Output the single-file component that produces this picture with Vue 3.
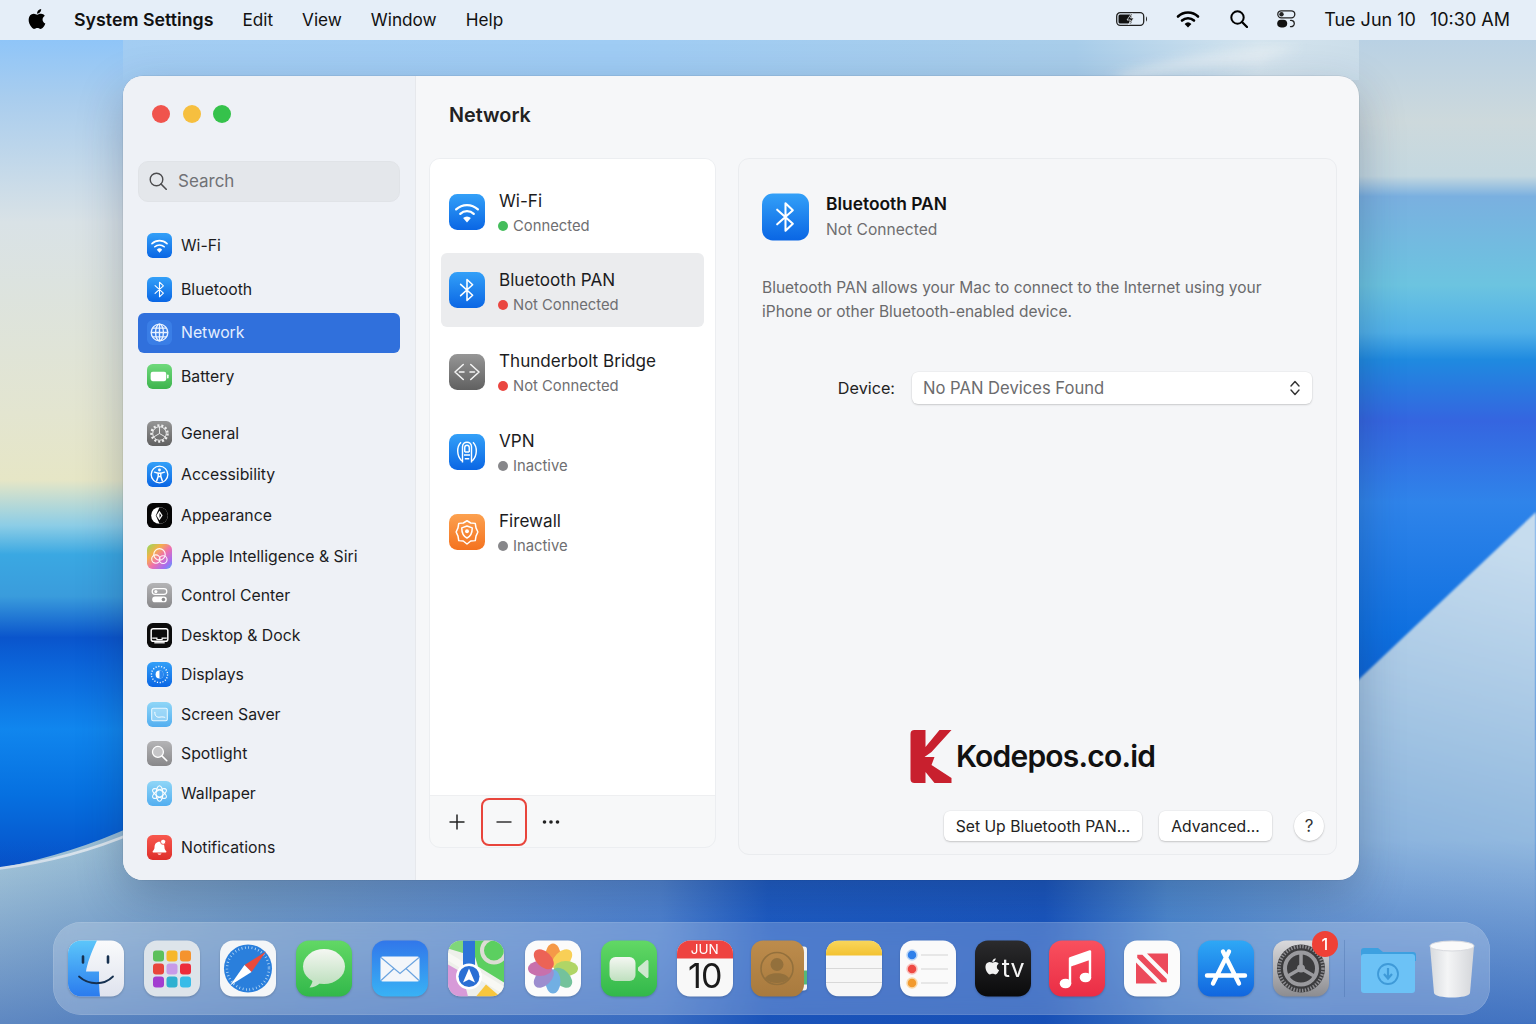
<template>
  <div class="desktop">
    <!-- wallpaper -->
    <svg class="wallpaper" viewBox="0 0 1536 1024" preserveAspectRatio="none">
      <defs>
        <linearGradient id="wpLeft" x1="0" y1="40" x2="0" y2="870" gradientUnits="userSpaceOnUse">
          <stop offset="0" stop-color="#8fc5f8" />
          <stop offset="0.07" stop-color="#a9cdee" />
          <stop offset="0.22" stop-color="#d9e2e6" />
          <stop offset="0.45" stop-color="#e3e5d0" />
          <stop offset="0.53" stop-color="#e6e6c6" />
          <stop offset="0.585" stop-color="#8ccde6" />
          <stop offset="0.62" stop-color="#3aa8e2" />
          <stop offset="0.67" stop-color="#3a9cdc" />
          <stop offset="0.72" stop-color="#0a55cc" />
          <stop offset="0.75" stop-color="#0b63d8" />
          <stop offset="0.83" stop-color="#1086ee" />
          <stop offset="0.91" stop-color="#0670e0" />
          <stop offset="1" stop-color="#0650c8" />
        </linearGradient>
        <linearGradient id="wpRight" x1="0" y1="40" x2="0" y2="720" gradientUnits="userSpaceOnUse">
          <stop offset="0" stop-color="#b9d1e4" />
          <stop offset="0.12" stop-color="#cdd9dc" />
          <stop offset="0.2" stop-color="#c4d8e0" />
          <stop offset="0.23" stop-color="#7ab0e0" />
          <stop offset="0.36" stop-color="#6cc4e0" />
          <stop offset="0.43" stop-color="#50b0e8" />
          <stop offset="0.47" stop-color="#1f8ae0" />
          <stop offset="0.56" stop-color="#3565e0" />
          <stop offset="0.68" stop-color="#2f84ea" />
          <stop offset="0.87" stop-color="#0f70e0" />
          <stop offset="1" stop-color="#0a5cd0" />
        </linearGradient>
        <linearGradient id="wpTop" x1="0" y1="0" x2="1536" y2="0" gradientUnits="userSpaceOnUse">
          <stop offset="0" stop-color="#a4cdf2" />
          <stop offset="0.4" stop-color="#9fccf4" />
          <stop offset="0.7" stop-color="#a8cdea" />
          <stop offset="0.82" stop-color="#d4e4ee" />
          <stop offset="1" stop-color="#bcd2e2" />
        </linearGradient>
        <linearGradient id="wpBottom" x1="0" y1="0" x2="1536" y2="0" gradientUnits="userSpaceOnUse">
          <stop offset="0" stop-color="#a8c9d9" />
          <stop offset="0.16" stop-color="#86aecf" />
          <stop offset="0.33" stop-color="#6d9cd6" />
          <stop offset="0.43" stop-color="#5c90d8" />
          <stop offset="0.5" stop-color="#2060c8" />
          <stop offset="0.68" stop-color="#1b59c2" />
          <stop offset="0.76" stop-color="#5b97d6" />
          <stop offset="0.9" stop-color="#82aedc" />
          <stop offset="1" stop-color="#8db5de" />
        </linearGradient>
        <linearGradient id="wpShade" x1="0" y1="840" x2="0" y2="1024" gradientUnits="userSpaceOnUse">
          <stop offset="0" stop-color="#1446aa" stop-opacity="0" />
          <stop offset="1" stop-color="#1446aa" stop-opacity="0.5" />
        </linearGradient>
        <linearGradient id="wpSlope" x1="1500" y1="540" x2="1380" y2="1000" gradientUnits="userSpaceOnUse">
          <stop offset="0" stop-color="#c6dcee" />
          <stop offset="0.45" stop-color="#9fc2e2" />
          <stop offset="1" stop-color="#6f9fd8" />
        </linearGradient>
        <filter id="wpBlur"><feGaussianBlur stdDeviation="1.2" /></filter>
        <filter id="wpBlurBig"><feGaussianBlur stdDeviation="6" /></filter>
      </defs>
      <rect x="0" y="40" width="768" height="840" fill="url(#wpLeft)" />
      <rect x="768" y="40" width="768" height="700" fill="url(#wpRight)" />
      <rect x="123" y="40" width="1236" height="40" fill="url(#wpTop)" />
      <path d="M1110 78 Q1190 52 1300 46 L1260 62 Q1180 66 1130 80Z" fill="#e8f0f4" opacity="0.8" filter="url(#wpBlurBig)" />
      <path d="M1300 735 L1536 512 V1024 H1300Z" fill="url(#wpSlope)" filter="url(#wpBlur)" />
      <path d="M-5 869 Q70 855 135 825 V1030 H-5Z" fill="url(#wpBottom)" />
      <path d="M-5 869 Q70 860 135 832" stroke="#dfe8ee" stroke-width="2.5" fill="none" />
      <rect x="100" y="870" width="1230" height="160" fill="url(#wpBottom)" />
      <rect x="1300" y="870" width="236" height="154" fill="url(#wpSlope)" opacity="0.55" />
      <rect x="0" y="840" width="1536" height="184" fill="url(#wpShade)" />
    </svg>

    <!-- shared icon symbols -->
    <svg class="defs" width="0" height="0">
      <defs>
        <linearGradient id="gBlue" x1="0" y1="0" x2="0" y2="1">
          <stop offset="0" stop-color="#33a0f8" /><stop offset="1" stop-color="#0a66e4" />
        </linearGradient>
        <linearGradient id="gGreen" x1="0" y1="0" x2="0" y2="1">
          <stop offset="0" stop-color="#6fd97c" /><stop offset="1" stop-color="#3db44d" />
        </linearGradient>
        <linearGradient id="gGray" x1="0" y1="0" x2="0" y2="1">
          <stop offset="0" stop-color="#969696" /><stop offset="1" stop-color="#606060" />
        </linearGradient>
        <linearGradient id="gLight" x1="0" y1="0" x2="0" y2="1">
          <stop offset="0" stop-color="#b4b4b6" /><stop offset="1" stop-color="#88888a" />
        </linearGradient>
        <linearGradient id="gOrange" x1="0" y1="0" x2="0" y2="1">
          <stop offset="0" stop-color="#fca14f" /><stop offset="1" stop-color="#f4721f" />
        </linearGradient>
        <linearGradient id="gRed" x1="0" y1="0" x2="0" y2="1">
          <stop offset="0" stop-color="#f8584e" /><stop offset="1" stop-color="#de2e2a" />
        </linearGradient>
        <linearGradient id="gSky" x1="0" y1="0" x2="0" y2="1">
          <stop offset="0" stop-color="#8fd6f7" /><stop offset="1" stop-color="#52aef0" />
        </linearGradient>
        <linearGradient id="gSiri" x1="0" y1="0" x2="1" y2="1">
          <stop offset="0" stop-color="#8fdc5a" /><stop offset="0.3" stop-color="#f5b04a" />
          <stop offset="0.55" stop-color="#ee6fae" /><stop offset="0.8" stop-color="#a66ef0" />
          <stop offset="1" stop-color="#4fa8f5" />
        </linearGradient>
        <linearGradient id="gBlack" x1="0" y1="0" x2="0" y2="1">
          <stop offset="0" stop-color="#2b2b2d" /><stop offset="1" stop-color="#0a0a0b" />
        </linearGradient>
        <linearGradient id="gFinder" x1="0" y1="0" x2="0" y2="1">
          <stop offset="0" stop-color="#5cc6fa" /><stop offset="1" stop-color="#2a7bee" />
        </linearGradient>
        <linearGradient id="gFinderR" x1="0" y1="0" x2="0" y2="1">
          <stop offset="0" stop-color="#fafbfc" /><stop offset="1" stop-color="#dfe3ee" />
        </linearGradient>
        <linearGradient id="gBubble" x1="0" y1="0" x2="0" y2="1">
          <stop offset="0" stop-color="#f4f7f2" /><stop offset="1" stop-color="#bfe0bf" />
        </linearGradient>
        <linearGradient id="gMail" x1="0" y1="0" x2="0" y2="1">
          <stop offset="0" stop-color="#3177ea" /><stop offset="1" stop-color="#39b2f5" />
        </linearGradient>
        <linearGradient id="gMsg" x1="0" y1="0" x2="0" y2="1">
          <stop offset="0" stop-color="#62d865" /><stop offset="1" stop-color="#32b84a" />
        </linearGradient>
        <linearGradient id="gMusic" x1="0" y1="0" x2="0" y2="1">
          <stop offset="0" stop-color="#f9505e" /><stop offset="1" stop-color="#ea2d45" />
        </linearGradient>
        <linearGradient id="gStore" x1="0" y1="0" x2="0" y2="1">
          <stop offset="0" stop-color="#2ea8f6" /><stop offset="1" stop-color="#1166df" />
        </linearGradient>
        <linearGradient id="gSteel" x1="0" y1="0" x2="0" y2="1">
          <stop offset="0" stop-color="#dadadc" /><stop offset="1" stop-color="#8c8c90" />
        </linearGradient>
        <linearGradient id="gBrown" x1="0" y1="0" x2="0" y2="1">
          <stop offset="0" stop-color="#bd8c4c" /><stop offset="1" stop-color="#a87a3e" />
        </linearGradient>
        <linearGradient id="gNote" x1="0" y1="0" x2="0" y2="1">
          <stop offset="0" stop-color="#f8d65c" /><stop offset="1" stop-color="#f3c231" />
        </linearGradient>
        <linearGradient id="gTrash" x1="0" y1="0" x2="1" y2="0">
          <stop offset="0" stop-color="#d7dade" /><stop offset="0.4" stop-color="#f4f5f6" /><stop offset="1" stop-color="#d4d6da" />
        </linearGradient>
        <clipPath id="clipMaps"><rect width="56" height="56" rx="13" /></clipPath>
        <clipPath id="clipNotes"><rect width="56" height="56" rx="13" /></clipPath>
        <path id="applePath" d="M17.05 20.28c-.98.95-2.05.8-3.08.35-1.09-.46-2.09-.48-3.24 0-1.44.62-2.2.44-3.06-.35C2.79 15.25 3.51 7.59 9.05 7.31c1.35.07 2.29.74 3.08.8 1.18-.24 2.31-.93 3.57-.84 1.51.12 2.65.72 3.4 1.8-3.12 1.87-2.38 5.98.48 7.13-.57 1.5-1.31 2.99-2.54 4.09zM12.03 7.25c-.15-2.23 1.66-4.07 3.74-4.25.29 2.58-2.34 4.5-3.74 4.25z" />
      </defs>

      <!-- settings icons, 48 box -->
      <symbol id="i-wifi" viewBox="0 0 48 48">
        <rect width="48" height="48" rx="11" fill="url(#gBlue)" />
        <g fill="none" stroke="#fff" stroke-width="3" stroke-linecap="round">
          <path d="M9.5 20.5a21 21 0 0 1 29 0" />
          <path d="M15 26.5a13 13 0 0 1 18 0" />
        </g>
        <path d="M24 38l-5.2-6a7.5 7.5 0 0 1 10.4 0z" fill="#fff" />
      </symbol>
      <symbol id="i-bt" viewBox="0 0 48 48">
        <rect width="48" height="48" rx="11" fill="url(#gBlue)" />
        <path d="M15.5 16.5L31.5 31L24 38V10L31.5 17L15.5 31.5" fill="none" stroke="#fff" stroke-width="2.1" stroke-linejoin="round" stroke-linecap="round" />
      </symbol>
      <symbol id="i-globe" viewBox="0 0 48 48">
        <rect width="48" height="48" rx="11" fill="#3a7ee6" />
        <g fill="none" stroke="#e8f2ff" stroke-width="2.6">
          <circle cx="24" cy="24" r="16" />
          <ellipse cx="24" cy="24" rx="7.5" ry="16" />
          <path d="M24 8v32M8 24h32M10.5 15.5h27M10.5 32.5h27" />
        </g>
      </symbol>
      <symbol id="i-battery" viewBox="0 0 48 48">
        <rect width="48" height="48" rx="11" fill="url(#gGreen)" />
        <rect x="7" y="15" width="30" height="18" rx="4" fill="#fff" />
        <rect x="38.5" y="20" width="3" height="8" rx="1.5" fill="#fff" />
      </symbol>
      <symbol id="i-general" viewBox="0 0 48 48">
        <rect width="48" height="48" rx="11" fill="url(#gGray)" />
        <circle cx="24" cy="24" r="15.5" fill="none" stroke="#eee" stroke-width="4.5" stroke-dasharray="4 3.6" />
        <circle cx="24" cy="24" r="13" fill="none" stroke="#eee" stroke-width="1.8" />
        <path d="M24 24V11M24 24l11 6.5M24 24l-11 6.5" stroke="#eee" stroke-width="1.8" fill="none" />
      </symbol>
      <symbol id="i-access" viewBox="0 0 48 48">
        <rect width="48" height="48" rx="11" fill="url(#gBlue)" />
        <circle cx="24" cy="24" r="16" fill="none" stroke="#fff" stroke-width="2.6" />
        <circle cx="24" cy="15.5" r="2.8" fill="#fff" />
        <path d="M14.5 19.5l7 2v6l-3 9M33.5 19.5l-7 2v6l3 9M21.5 21.5h5M22 28h4" stroke="#fff" stroke-width="2.8" fill="none" stroke-linecap="round" />
      </symbol>
      <symbol id="i-appearance" viewBox="0 0 48 48">
        <rect width="48" height="48" rx="11" fill="#050505" />
        <circle cx="24" cy="24" r="16" fill="#fff" />
        <path d="M24 8a16 16 0 0 1 0 32l-7-16z" fill="#0a0a0a" />
        <path d="M24 15l6 9-6 9-6-9z" fill="#fff" />
        <path d="M24 19l3.2 5-3.2 5z" fill="#0a0a0a" />
      </symbol>
      <symbol id="i-siri" viewBox="0 0 48 48">
        <rect width="48" height="48" rx="11" fill="url(#gSiri)" />
        <g fill="none" stroke="#fff" stroke-width="2.2" opacity="0.92">
          <circle cx="24" cy="20" r="11" />
          <circle cx="17" cy="29" r="8" />
          <circle cx="31" cy="30" r="7.5" />
        </g>
      </symbol>
      <symbol id="i-control" viewBox="0 0 48 48">
        <rect width="48" height="48" rx="11" fill="url(#gLight)" />
        <rect x="10" y="11" width="28" height="11" rx="5.5" fill="none" stroke="#fff" stroke-width="2.4" />
        <circle cx="17" cy="16.5" r="3" fill="#fff" />
        <rect x="10" y="26" width="28" height="11" rx="5.5" fill="#fff" />
        <circle cx="31.5" cy="31.5" r="3.4" fill="#8a8a8c" />
      </symbol>
      <symbol id="i-dock" viewBox="0 0 48 48">
        <rect width="48" height="48" rx="11" fill="#0c0c0c" />
        <rect x="8" y="11" width="32" height="24" rx="4" fill="none" stroke="#fff" stroke-width="2.8" />
        <path d="M10 29h9v3h10v-3h9" fill="none" stroke="#fff" stroke-width="2.2" />
        <path d="M14 38h20" stroke="#fff" stroke-width="2.4" />
      </symbol>
      <symbol id="i-display" viewBox="0 0 48 48">
        <rect width="48" height="48" rx="11" fill="url(#gBlue)" />
        <circle cx="24" cy="24" r="15.5" fill="none" stroke="#fff" stroke-width="2.6" stroke-dasharray="2.2 3.2" />
        <circle cx="24" cy="24" r="7.5" fill="#fff" />
        <path d="M24 16.5a7.5 7.5 0 0 1 0 15z" fill="#2b86ee" />
      </symbol>
      <symbol id="i-saver" viewBox="0 0 48 48">
        <rect width="48" height="48" rx="11" fill="url(#gSky)" />
        <rect x="9" y="12" width="30" height="24" rx="3" fill="#bfe8fb" fill-opacity="0.5" stroke="#e9f8ff" stroke-width="2" />
        <path d="M15 19c0 9 5 11 10 10s8 0 10 1" fill="none" stroke="#fff" stroke-width="1.8" />
      </symbol>
      <symbol id="i-spot" viewBox="0 0 48 48">
        <rect width="48" height="48" rx="11" fill="url(#gLight)" />
        <circle cx="21" cy="21" r="10.5" fill="#c5c5c7" stroke="#fff" stroke-width="2.4" />
        <path d="M29 29l9 9" stroke="#fff" stroke-width="3" stroke-linecap="round" />
      </symbol>
      <symbol id="i-wall" viewBox="0 0 48 48">
        <rect width="48" height="48" rx="11" fill="url(#gSky)" />
        <g fill="none" stroke="#fff" stroke-width="2">
          <ellipse cx="24" cy="24" rx="6.5" ry="15" />
          <ellipse cx="24" cy="24" rx="6.5" ry="15" transform="rotate(60 24 24)" />
          <ellipse cx="24" cy="24" rx="6.5" ry="15" transform="rotate(120 24 24)" />
        </g>
      </symbol>
      <symbol id="i-notif" viewBox="0 0 48 48">
        <rect width="48" height="48" rx="11" fill="url(#gRed)" />
        <path d="M24 13c-6 0-9.500 4.500-9.500 10 0 4-1.500 6-4 9 0 1 1 1.500 2 1.500h23c1 0 2-.5 2-1.500-2.500-3-4-5-4-9 0-5.500-3.500-10-9.500-10z" fill="#fff" />
        <path d="M20 35.500a4.500 4.500 0 0 0 8 0z" fill="#fff" />
        <circle cx="31" cy="13" r="5" fill="#fff" stroke="#e83a34" stroke-width="1.5" />
      </symbol>
      <symbol id="i-bridge" viewBox="0 0 48 48">
        <rect width="48" height="48" rx="11" fill="url(#gGray)" />
        <path d="M19 14L8 24l11 10M29 14l11 10-11 10M14 24h6M28 24h6" fill="none" stroke="#f4f4f4" stroke-width="2.1" stroke-linejoin="round" stroke-linecap="round" />
      </symbol>
      <symbol id="i-vpn" viewBox="0 0 48 48">
        <rect width="48" height="48" rx="11" fill="url(#gBlue)" />
        <g fill="none" stroke="#fff" stroke-width="1.9">
          <path d="M17 36c-7-7-7-19-1-25M31 36c7-7 7-19 1-25" />
          <path d="M18 38V17c0-8 12-8 12 0v21" />
          <path d="M21 24v-6c0-4 6-4 6 0v6M20 28h8M21 24h6M21 33h6" />
        </g>
      </symbol>
      <symbol id="i-fire" viewBox="0 0 48 48">
        <rect width="48" height="48" rx="11" fill="url(#gOrange)" />
        <path d="M24 9l5 3 6 .5 1 6 2.500 5.500-2.500 5.500-1 6-6 .5-5 4-5-4-6-.5-1-6L9.500 24l2.500-5.500 1-6 6-.5z" fill="none" stroke="#fff" stroke-width="2" stroke-linejoin="round" />
        <path d="M24 16l7 2.500c0 7-2 11-7 13.500-5-2.500-7-6.500-7-13.500z" fill="none" stroke="#fff" stroke-width="2" stroke-linejoin="round" />
        <circle cx="24" cy="23" r="2.600" fill="#fff" />
      </symbol>

      <!-- dock icons, 56 box -->
      <symbol id="d-finder" viewBox="0 0 56 56">
        <rect width="56" height="56" rx="13" fill="url(#gFinderR)" />
        <path d="M13 0H29C23 12 19 24 18 31H31C31 40 31 49 32 56H13A13 13 0 0 1 0 43V13A13 13 0 0 1 13 0Z" fill="url(#gFinder)" />
        <path d="M15 16v6M40 16v6" stroke="#16304f" stroke-width="2.6" stroke-linecap="round" />
        <path d="M11 36c10 9 25 9 34 0" fill="none" stroke="#16304f" stroke-width="1.8" stroke-linecap="round" />
      </symbol>
      <symbol id="d-launch" viewBox="0 0 56 56">
        <rect width="56" height="56" rx="13" fill="#dde4ea" />
        <rect x="9" y="10" width="11" height="11" rx="3" fill="#5cc05c" />
        <rect x="22.500" y="10" width="11" height="11" rx="3" fill="#f6b72c" />
        <rect x="36" y="10" width="11" height="11" rx="3" fill="#f5932e" />
        <rect x="9" y="23" width="11" height="11" rx="3" fill="#e8453c" />
        <rect x="22.500" y="23" width="11" height="11" rx="3" fill="#c79be8" />
        <rect x="36" y="23" width="11" height="11" rx="3" fill="#ec2c3c" />
        <rect x="9" y="36" width="11" height="11" rx="3" fill="#a23ed0" />
        <rect x="22.500" y="36" width="11" height="11" rx="3" fill="#2fb0d0" />
        <rect x="36" y="36" width="11" height="11" rx="3" fill="#38bce8" />
      </symbol>
      <symbol id="d-safari" viewBox="0 0 56 56">
        <rect width="56" height="56" rx="13" fill="#f4f6f8" />
        <circle cx="28" cy="28" r="24" fill="#2a7fdc" />
        <circle cx="28" cy="28" r="21" fill="none" stroke="#bcdcf6" stroke-width="2.5" stroke-dasharray="0.8 2.6" />
        <path d="M46 11L24.500 24.500L31.500 31.500Z" fill="#ea4a3c" />
        <path d="M10 45L24.500 24.500L31.500 31.500Z" fill="#fff" />
      </symbol>
      <symbol id="d-msg" viewBox="0 0 56 56">
        <rect width="56" height="56" rx="13" fill="url(#gMsg)" />
        <ellipse cx="28" cy="26" rx="21" ry="17.500" fill="url(#gBubble)" />
        <path d="M17 37c0 4-1.500 7-3.500 10 4 0 8-1.500 11-5z" fill="#c6e4c6" />
      </symbol>
      <symbol id="d-mail" viewBox="0 0 56 56">
        <rect width="56" height="56" rx="13" fill="url(#gMail)" />
        <rect x="8.500" y="16" width="39" height="25" rx="2" fill="#f3f6fa" />
        <path d="M9 17l19 16 19-16M9 40l13-12M47 40L34 28" fill="none" stroke="#6ba4e0" stroke-width="1.200" />
      </symbol>
      <symbol id="d-maps" viewBox="0 0 56 56">
        <g clip-path="url(#clipMaps)">
          <rect width="56" height="56" fill="#eef0ea" />
          <path d="M22 0H56V42L30 26Z" fill="#5ccf60" />
          <path d="M0 0H20V14L0 8Z" fill="#7fd67a" />
          <path d="M0 24L14 32 20 56H0Z" fill="#d79ad8" />
          <path d="M28 56L38 44 52 56Z" fill="#f7c63e" />
          <path d="M0 12L56 46V54L0 20Z" fill="#f8f8f4" />
          <rect x="15" y="0" width="12" height="36" fill="#2d74d8" />
          <circle cx="46" cy="10" r="12" fill="none" stroke="#dcdcd4" stroke-width="4" />
          <circle cx="21" cy="36" r="13" fill="#fff" />
          <circle cx="21" cy="36" r="10.500" fill="#2a6fd4" />
          <path d="M21 28l6 14-6-3-6 3z" fill="#fff" />
        </g>
      </symbol>
      <symbol id="d-photos" viewBox="0 0 56 56">
        <rect width="56" height="56" rx="13" fill="#fbfbfb" />
        <g opacity="0.86">
          <ellipse cx="28" cy="15" rx="7.500" ry="12" fill="#f58a2b" />
          <ellipse cx="28" cy="15" rx="7.500" ry="12" fill="#f8c83c" transform="rotate(45 28 28)" />
          <ellipse cx="28" cy="15" rx="7.500" ry="12" fill="#a4cf4e" transform="rotate(90 28 28)" />
          <ellipse cx="28" cy="15" rx="7.500" ry="12" fill="#5fb98c" transform="rotate(135 28 28)" />
          <ellipse cx="28" cy="15" rx="7.500" ry="12" fill="#5ba3e0" transform="rotate(180 28 28)" />
          <ellipse cx="28" cy="15" rx="7.500" ry="12" fill="#8d7cc8" transform="rotate(225 28 28)" />
          <ellipse cx="28" cy="15" rx="7.500" ry="12" fill="#c05aa0" transform="rotate(270 28 28)" />
          <ellipse cx="28" cy="15" rx="7.500" ry="12" fill="#ea4b3c" transform="rotate(315 28 28)" />
        </g>
      </symbol>
      <symbol id="d-facetime" viewBox="0 0 56 56">
        <rect width="56" height="56" rx="13" fill="url(#gMsg)" />
        <rect x="8.500" y="16.500" width="26" height="24" rx="6" fill="url(#gBubble)" />
        <path d="M37 27l8-7c1-1 2.500-.5 2.500 1v15c0 1.500-1.500 2-2.500 1l-8-7z" fill="#cfe8cf" />
      </symbol>
      <symbol id="d-calendar" viewBox="0 0 56 56">
        <rect width="56" height="56" rx="13" fill="#f8f8f8" />
        <path d="M13 0H43A13 13 0 0 1 56 13V18H0V13A13 13 0 0 1 13 0Z" fill="#ee4340" />
      </symbol>
      <symbol id="d-contacts" viewBox="0 0 56 56">
        <rect x="48" y="6" width="8" height="44" rx="3" fill="#f2f2f2" />
        <rect x="51" y="30" width="5" height="14" fill="#55b878" />
        <rect width="53" height="56" rx="12" fill="url(#gBrown)" />
        <circle cx="26" cy="28" r="16" fill="none" stroke="#93703c" stroke-width="1.600" />
        <circle cx="26" cy="24" r="6.500" fill="#93703c" />
        <path d="M14 38c3-7 21-7 24 0-6 6-18 6-24 0z" fill="#93703c" />
      </symbol>
      <symbol id="d-notes" viewBox="0 0 56 56">
        <g clip-path="url(#clipNotes)">
          <rect width="56" height="56" fill="#f6f6f6" />
          <rect width="56" height="15" fill="url(#gNote)" />
          <path d="M0 28h56M0 42h56" stroke="#d8d8d8" stroke-width="1.200" />
        </g>
      </symbol>
      <symbol id="d-remind" viewBox="0 0 56 56">
        <rect width="56" height="56" rx="13" fill="#fafafa" />
        <circle cx="12" cy="14.500" r="5" fill="#2f80ea" stroke="#bcd6f6" stroke-width="1.500" />
        <circle cx="12" cy="28.500" r="5" fill="#ee4a44" stroke="#f8c4c0" stroke-width="1.500" />
        <circle cx="12" cy="42.500" r="5" fill="#f29a2e" stroke="#fad8a8" stroke-width="1.500" />
        <path d="M21 14.500h27M21 28.500h27M21 42.500h27" stroke="#d4d4d4" stroke-width="1.200" />
      </symbol>
      <symbol id="d-tv" viewBox="0 0 56 56">
        <rect width="56" height="56" rx="13" fill="url(#gBlack)" />
        <use href="#applePath" transform="translate(6.500 15) scale(.9)" fill="#f2f2f2" />
      </symbol>
      <symbol id="d-music" viewBox="0 0 56 56">
        <rect width="56" height="56" rx="13" fill="url(#gMusic)" />
        <path d="M21 18v25M41 11v25M21 18l20-7v7l-20 7z" fill="#fff" stroke="#fff" stroke-width="2.400" stroke-linejoin="round" />
        <ellipse cx="16.500" cy="43" rx="5.800" ry="4.800" fill="#fff" />
        <ellipse cx="36.500" cy="37" rx="5.800" ry="4.800" fill="#fff" />
      </symbol>
      <symbol id="d-news" viewBox="0 0 56 56">
        <rect width="56" height="56" rx="13" fill="#fbfbfb" />
        <path d="M12 22L33 43H12ZM23 13H44V34Z" fill="#ec4a5a" />
        <path d="M12 13h7l25 25v5h-7L12 18z" fill="#ec4a5a" stroke="#fbfbfb" stroke-width="2.500" />
      </symbol>
      <symbol id="d-store" viewBox="0 0 56 56">
        <rect width="56" height="56" rx="13" fill="url(#gStore)" />
        <path d="M31 11L15 43M25 11L41 43M9 35h38" fill="none" stroke="#fff" stroke-width="4.400" stroke-linecap="round" />
      </symbol>
      <symbol id="d-system" viewBox="0 0 56 56">
        <rect width="56" height="56" rx="13" fill="url(#gSteel)" />
        <circle cx="28" cy="28" r="24" fill="#3c3c3e" />
        <circle cx="28" cy="28" r="22" fill="none" stroke="#8e8e92" stroke-width="3.500" stroke-dasharray="1.400 1.500" />
        <circle cx="28" cy="28" r="16" fill="none" stroke="#9a9a9e" stroke-width="4" />
        <path d="M28 28V12M28 28l14 8M28 28l-14 8" stroke="#9a9a9e" stroke-width="3.500" />
        <circle cx="28" cy="28" r="4" fill="#9a9a9e" />
      </symbol>
      <symbol id="d-folder" viewBox="0 0 56 56">
        <path d="M1 10a3 3 0 0 1 3-3h14l5 4h30a3 3 0 0 1 3 3v6H1z" fill="#3da0e0" />
        <rect x="1" y="13" width="54" height="39" rx="3" fill="#6cc2f6" />
        <circle cx="28" cy="33" r="10" fill="none" stroke="#3f9ad8" stroke-width="1.800" />
        <path d="M28 27v10M24 33l4 4.500 4-4.500" fill="none" stroke="#3f9ad8" stroke-width="2.200" />
      </symbol>
      <symbol id="d-trash" viewBox="0 0 48 60">
        <path d="M2 7C6 1 42 1 46 7L42 54C41 60 7 60 6 54Z" fill="url(#gTrash)" />
        <ellipse cx="24" cy="7" rx="22" ry="5" fill="#fafafa" stroke="#d8dadf" />
      </symbol>
    </svg>

    <!-- menu bar -->
    <header class="menubar">
      <svg class="apple" viewBox="2 2 20 20"><use href="#applePath" fill="#000" /></svg>
      <nav class="menus">
        <span class="app-name">System Settings</span>
        <span v-for="m in menus" :key="m">{{ m }}</span>
      </nav>
      <div class="status">
        <svg class="st-battery" viewBox="0 0 32 16">
          <rect x="0.700" y="1.700" width="27" height="12.600" rx="3.500" fill="none" stroke="#222" stroke-width="1.300" />
          <rect x="2.500" y="3.500" width="13" height="9" rx="1.500" fill="#111" />
          <path d="M30 5.500c1.300.4 1.300 4.600 0 5z" fill="#222" />
          <path d="M15.500 2.500L11 9h3.500l-2 5L18 7h-3.500l2-4.500z" fill="#111" stroke="#eef3f8" stroke-width="0.800" />
        </svg>
        <svg class="st-wifi" viewBox="0 0 24 18">
          <g fill="none" stroke="#000" stroke-width="2.600" stroke-linecap="round">
            <path d="M2 6.500a14.500 14.500 0 0 1 20 0" />
            <path d="M6 10.500a9 9 0 0 1 12 0" />
          </g>
          <path d="M12 17.500l-3.400-3.600a5 5 0 0 1 6.800 0z" fill="#000" />
        </svg>
        <svg class="st-search" viewBox="0 0 18 18">
          <circle cx="7.500" cy="7.500" r="6.200" fill="none" stroke="#000" stroke-width="2" />
          <path d="M12 12l5 5" stroke="#000" stroke-width="2.300" stroke-linecap="round" />
        </svg>
        <svg class="st-cc" viewBox="0 0 19 18">
          <rect x="0.800" y="0.800" width="17" height="7" rx="3.500" fill="none" stroke="#222" stroke-width="1.300" />
          <circle cx="4.500" cy="4.300" r="2.200" fill="#222" />
          <rect x="0.200" y="9.800" width="10" height="7.600" rx="3.800" fill="#111" />
          <path d="M13 10.500a3.200 3.200 0 1 1 0 6" fill="none" stroke="#222" stroke-width="1.300" />
        </svg>
        <span class="date">Tue Jun 10</span>
        <span class="time">10:30 AM</span>
      </div>
    </header>

    <!-- settings window -->
    <main class="window">
      <aside class="sidebar">
        <div class="lights">
          <i class="light red"></i>
          <i class="light yellow"></i>
          <i class="light green"></i>
        </div>
        <div class="search">
          <svg class="search-icon" viewBox="0 0 18 18">
            <circle cx="7.500" cy="7.500" r="6.300" fill="none" stroke="#4c4c4e" stroke-width="1.400" />
            <path d="M12 12l5.200 5.200" stroke="#4c4c4e" stroke-width="1.600" stroke-linecap="round" />
          </svg>
          <span>Search</span>
        </div>
        <ul class="group group-first">
          <li v-for="item in groupOne" :key="item.label" class="side-row" :class="{ active: item.active }">
            <svg class="side-icon"><use :href="'#i-' + item.icon" /></svg>
            <span>{{ item.label }}</span>
          </li>
        </ul>
        <ul class="group group-second">
          <li v-for="item in groupTwo" :key="item.label" class="side-row">
            <svg class="side-icon"><use :href="'#i-' + item.icon" /></svg>
            <span>{{ item.label }}</span>
          </li>
        </ul>
        <ul class="group group-third">
          <li class="side-row">
            <svg class="side-icon"><use href="#i-notif" /></svg>
            <span>Notifications</span>
          </li>
        </ul>
      </aside>

      <section class="content">
        <h1 class="title">Network</h1>
        <div class="panels">
          <div class="list-panel">
            <div class="net-list">
              <div v-for="n in networks" :key="n.name" class="net-row" :class="{ selected: n.selected }">
                <svg class="net-icon"><use :href="'#i-' + n.icon" /></svg>
                <div class="net-text">
                  <div class="net-name">{{ n.name }}</div>
                  <div class="net-status"><i class="dot" :class="n.dot"></i>{{ n.status }}</div>
                </div>
              </div>
            </div>
            <div class="toolbar">
              <button class="tool">
                <svg viewBox="0 0 18 18"><path d="M9 1.500v15M1.500 9h15" stroke="#222" stroke-width="1.500" /></svg>
              </button>
              <button class="tool tool-marked">
                <svg viewBox="0 0 18 18"><path d="M1.500 9h15" stroke="#333" stroke-width="1.500" /></svg>
              </button>
              <button class="tool">
                <svg viewBox="0 0 18 18"><circle cx="2.500" cy="9" r="1.800" fill="#222" /><circle cx="9" cy="9" r="1.800" fill="#222" /><circle cx="15.500" cy="9" r="1.800" fill="#222" /></svg>
              </button>
            </div>
          </div>

          <div class="detail">
            <div class="detail-head">
              <svg class="detail-icon"><use href="#i-bt" /></svg>
              <div>
                <div class="detail-name">Bluetooth PAN</div>
                <div class="detail-status">Not Connected</div>
              </div>
            </div>
            <p class="desc">Bluetooth PAN allows your Mac to connect to the Internet using your<br />iPhone or other Bluetooth-enabled device.</p>
            <div class="device-row">
              <label>Device:</label>
              <div class="select">
                <span>No PAN Devices Found</span>
                <svg viewBox="0 0 12 18"><path d="M2 7l4-4.500L10 7M2 11l4 4.500L10 11" fill="none" stroke="#333" stroke-width="1.400" stroke-linecap="round" stroke-linejoin="round" /></svg>
              </div>
            </div>
            <div class="brand">
              <svg class="brand-mark" viewBox="0 0 42 53">
                <path d="M4 0H15V17L29 0H41L21 22L14 27H24L21 35L41 48V53H24L15 42V53H4Q0 53 0 49V4Q0 0 4 0Z" fill="#c8202e" />
              </svg>
              <span class="brand-name">Kodepos.co.id</span>
            </div>
            <div class="actions">
              <button class="btn">Set Up Bluetooth PAN...</button>
              <button class="btn">Advanced...</button>
              <button class="help">?</button>
            </div>
          </div>
        </div>
      </section>
    </main>

    <!-- dock -->
    <footer class="dock">
      <div v-for="d in dockApps" :key="d" class="dock-app">
        <svg class="dock-icon"><use :href="'#d-' + d" /></svg>
        <template v-if="d === 'calendar'">
          <span class="cal-month">JUN</span>
          <span class="cal-day">10</span>
        </template>
        <span v-if="d === 'tv'" class="tv-label">tv</span>
        <span v-if="d === 'system'" class="badge">1</span>
      </div>
      <div class="dock-sep"></div>
      <svg class="dock-folder"><use href="#d-folder" /></svg>
      <svg class="dock-trash"><use href="#d-trash" /></svg>
    </footer>
  </div>
</template>

<script setup>
const menus = ["Edit", "View", "Window", "Help"];

const groupOne = [
  { label: "Wi-Fi", icon: "wifi" },
  { label: "Bluetooth", icon: "bt" },
  { label: "Network", icon: "globe", active: true },
  { label: "Battery", icon: "battery" }
];

const groupTwo = [
  { label: "General", icon: "general" },
  { label: "Accessibility", icon: "access" },
  { label: "Appearance", icon: "appearance" },
  { label: "Apple Intelligence & Siri", icon: "siri" },
  { label: "Control Center", icon: "control" },
  { label: "Desktop & Dock", icon: "dock" },
  { label: "Displays", icon: "display" },
  { label: "Screen Saver", icon: "saver" },
  { label: "Spotlight", icon: "spot" },
  { label: "Wallpaper", icon: "wall" }
];

const networks = [
  { name: "Wi-Fi", status: "Connected", dot: "on", icon: "wifi" },
  { name: "Bluetooth PAN", status: "Not Connected", dot: "off", icon: "bt", selected: true },
  { name: "Thunderbolt Bridge", status: "Not Connected", dot: "off", icon: "bridge" },
  { name: "VPN", status: "Inactive", dot: "idle", icon: "vpn" },
  { name: "Firewall", status: "Inactive", dot: "idle", icon: "fire" }
];

const dockApps = [
  "finder", "launch", "safari", "msg", "mail", "maps", "photos", "facetime", "calendar",
  "contacts", "notes", "remind", "tv", "music", "news", "store", "system"
];
</script>

<style>
html,
body {
  margin: 0;
  background: #3a7fd8;
}
</style>

<style scoped>
.desktop {
  position: relative;
  width: 1536px;
  height: 1024px;
  overflow: hidden;
  display: flex;
  flex-direction: column;
  font-family: Inter, "Liberation Sans", sans-serif;
  color: #1c1c1e;
}
.wallpaper {
  position: absolute;
  inset: 0;
  width: 1536px;
  height: 1024px;
}
.defs {
  position: absolute;
}

/* menu bar */
.menubar {
  position: relative;
  height: 40px;
  flex: none;
  display: flex;
  align-items: center;
  padding: 0 26px 2px 26px;
  box-sizing: border-box;
  background: rgba(238, 244, 250, 0.95);
  font-size: 17.200px;
  color: #111;
}
.apple {
  width: 22px;
  height: 22px;
  margin-right: 26px;
}
.menus {
  display: flex;
  gap: 29px;
}
.app-name {
  font-size: 17.800px;
  font-weight: 600;
}
.status {
  margin-left: auto;
  display: flex;
  align-items: center;
  font-size: 18px;
}
.st-battery {
  width: 32px;
  height: 16px;
  margin-right: 28px;
}
.st-wifi {
  width: 24px;
  height: 18px;
  margin-right: 30px;
}
.st-search {
  width: 18px;
  height: 18px;
  margin-right: 29px;
}
.st-cc {
  width: 19px;
  height: 18px;
  margin-right: 28px;
}
.date {
  margin-right: 14px;
}

/* window */
.window {
  position: relative;
  margin: 36px 0 0 123px;
  width: 1236px;
  height: 804px;
  flex: none;
  display: flex;
  border-radius: 20px;
  overflow: hidden;
  background: #f6f7f9;
  box-shadow: 0 16px 46px rgba(20, 40, 80, 0.28), 0 0 0 0.5px rgba(0, 0, 0, 0.1);
}
.sidebar {
  width: 293px;
  flex: none;
  padding: 0 15px;
  box-sizing: border-box;
  background: #eef1f6;
  border-right: 1px solid #e6e8ec;
  overflow: hidden;
}
.lights {
  display: flex;
  gap: 12.500px;
  padding: 29px 0 0 14px;
}
.light {
  width: 18px;
  height: 18px;
  border-radius: 50%;
}
.red {
  background: #f0544d;
}
.yellow {
  background: #f6bf3f;
}
.green {
  background: #35c24b;
}
.search {
  margin-top: 38px;
  height: 41px;
  display: flex;
  align-items: center;
  gap: 11px;
  padding: 0 0 2px 10px;
  border-radius: 10px;
  background: #e4e7eb;
  border: 0.5px solid #e0e3e7;
  box-sizing: border-box;
  font-size: 17px;
  color: #707276;
}
.search-icon {
  width: 18px;
  height: 18px;
}
.group {
  list-style: none;
  margin: 0;
  padding: 0;
}
.group-first {
  margin-top: 23.600px;
  display: flex;
  flex-direction: column;
  gap: 3.700px;
}
.group-first .side-row {
  height: 40px;
}
.group-second {
  margin-top: 16.800px;
}
.group-second .side-row:nth-child(-n + 3) {
  height: 41px;
}
.group-third {
  margin-top: 14.500px;
}
.side-row {
  height: 39.500px;
  display: flex;
  align-items: center;
  gap: 9px;
  padding-left: 9px;
  border-radius: 6px;
  font-size: 15.800px;
}
.side-row.active {
  background: #3070dc;
  color: #e4eeff;
}
.side-icon {
  width: 25px;
  height: 25px;
  flex: none;
}

/* content */
.content {
  flex: 1;
  min-width: 0;
}
.title {
  margin: 0;
  height: 82px;
  padding-left: 33px;
  line-height: 78px;
  font-size: 19.800px;
  font-weight: 600;
  color: #222;
  box-sizing: border-box;
}
.panels {
  display: flex;
  align-items: flex-start;
  gap: 22px;
  padding-left: 13px;
}
.list-panel {
  width: 287px;
  height: 690px;
  display: flex;
  flex-direction: column;
  border-radius: 11px;
  overflow: hidden;
  background: #f7f8f9;
  border: 1px solid #eceef1;
  box-sizing: border-box;
}
.net-list {
  flex: 1;
  background: #fff;
  padding: 16px 11px 0 11px;
}
.net-row {
  height: 74px;
  display: flex;
  align-items: center;
  gap: 14px;
  padding-left: 8px;
  border-radius: 6px;
  margin-bottom: 6px;
}
.net-row:nth-child(1) {
  margin-bottom: 4px;
}
.net-row:nth-child(2) {
  margin-bottom: 8px;
}
.net-row.selected {
  background: #ebecee;
}
.net-row.selected .net-text {
  margin-top: 3px;
}
.net-icon {
  width: 36px;
  height: 36px;
  flex: none;
}
.net-name {
  font-size: 17.100px;
  line-height: 24px;
  color: #1c1c1e;
}
.net-status {
  display: flex;
  align-items: center;
  margin-top: 3px;
  font-size: 14.800px;
  line-height: 20px;
  color: #6f6f72;
}
.dot {
  width: 10px;
  height: 10px;
  border-radius: 50%;
  margin: 0 5px 0 -1px;
}
.dot.on {
  background: #45bd5c;
}
.dot.off {
  background: #ea4640;
}
.dot.idle {
  background: #87878a;
}
.toolbar {
  height: 52px;
  flex: none;
  display: flex;
  align-items: center;
  gap: 1px;
  padding-left: 4px;
  border-top: 1px solid #eeeff1;
  box-sizing: border-box;
}
.tool {
  width: 46px;
  height: 48px;
  padding: 0;
  border: 0;
  background: none;
  display: flex;
  align-items: center;
  justify-content: center;
  box-sizing: border-box;
}
.tool svg {
  width: 18px;
  height: 18px;
}
.tool-marked {
  border: 2.500px solid #e8453c;
  border-radius: 8px;
}

.detail {
  width: 599px;
  height: 697px;
  display: flex;
  flex-direction: column;
  padding: 33px 12px 13px 23px;
  box-sizing: border-box;
  border: 1px solid #eaecef;
  border-radius: 11px;
  background: #f5f6f8;
}
.detail-head {
  display: flex;
  align-items: center;
  gap: 17px;
}
.detail-icon {
  width: 47px;
  height: 48px;
  flex: none;
}
.detail-name {
  font-size: 17.400px;
  line-height: 24px;
  font-weight: 600;
  color: #111;
}
.detail-status {
  margin-top: 3px;
  font-size: 15.600px;
  line-height: 22px;
  color: #6e6e70;
}
.desc {
  margin: 35px 0 0;
  font-size: 15.500px;
  line-height: 24px;
  color: #6a6a6c;
}
.device-row {
  margin-top: 48px;
  padding-right: 12px;
  display: flex;
  align-items: center;
  justify-content: flex-end;
  gap: 17px;
  font-size: 16.200px;
  color: #222;
}
.select {
  width: 400px;
  height: 32px;
  display: flex;
  align-items: center;
  justify-content: space-between;
  padding: 0 11px;
  box-sizing: border-box;
  border-radius: 6px;
  background: #fff;
  box-shadow: 0 1px 2px rgba(0, 0, 0, 0.16), 0 0 0 0.5px rgba(0, 0, 0, 0.05);
  font-size: 16.600px;
  color: #6c6c6e;
}
.select svg {
  width: 12px;
  height: 18px;
}
.brand {
  margin-top: auto;
  margin-left: 148px;
  display: flex;
  align-items: center;
  gap: 3px;
  font-size: 30px;
  font-weight: 600;
  letter-spacing: -0.800px;
  color: #111;
}
.brand-name {
  margin-top: -2px;
}
.brand-mark {
  width: 43px;
  height: 53px;
}
.actions {
  margin-top: 28px;
  display: flex;
  align-items: center;
  justify-content: flex-end;
}
.btn {
  height: 30px;
  width: 198px;
  padding: 0;
  margin-right: 17px;
  border: 0;
  border-radius: 6px;
  background: #fff;
  box-shadow: 0 1px 2px rgba(0, 0, 0, 0.18), 0 0 0 0.5px rgba(0, 0, 0, 0.05);
  font: 15.700px Inter, "Liberation Sans", sans-serif;
  color: #222;
}
.btn + .btn {
  width: 113px;
}
.help {
  width: 30px;
  height: 30px;
  margin-left: 5px;
  padding: 0;
  border: 0;
  border-radius: 50%;
  background: #fff;
  box-shadow: 0 1px 2px rgba(0, 0, 0, 0.18), 0 0 0 0.5px rgba(0, 0, 0, 0.05);
  font: 17px Inter, "Liberation Sans", sans-serif;
  color: #333;
}

/* dock */
.dock {
  position: relative;
  margin: 42px 0 0 53px;
  width: 1437px;
  height: 93px;
  flex: none;
  display: flex;
  align-items: center;
  padding-left: 15px;
  box-sizing: border-box;
  border-radius: 28px;
  background: rgba(255, 255, 255, 0.22);
  backdrop-filter: blur(10px);
  box-shadow: inset 0 0 0 0.5px rgba(255, 255, 255, 0.2);
}
.dock-app {
  position: relative;
  width: 56px;
  height: 57px;
  margin-right: 18.500px;
  flex: none;
}
.dock-app:nth-child(-n + 8) {
  margin-right: 20.100px;
}
.dock-icon {
  width: 56px;
  height: 57px;
  display: block;
  filter: drop-shadow(0 1px 1px rgba(0, 0, 0, 0.18));
}
.cal-month {
  position: absolute;
  top: 1px;
  left: 0;
  right: 0;
  text-align: center;
  font-size: 13.500px;
  line-height: 17px;
  color: #fff;
}
.cal-day {
  position: absolute;
  top: 17px;
  left: 0;
  right: 0;
  text-align: center;
  font-size: 34px;
  line-height: 38px;
  letter-spacing: -1px;
  color: #1a1a1a;
}
.tv-label {
  position: absolute;
  top: 13px;
  left: 27px;
  font-size: 25px;
  line-height: 30px;
  color: #f4f4f4;
}
.badge {
  position: absolute;
  top: -9px;
  right: -9px;
  width: 26px;
  height: 26px;
  border-radius: 50%;
  background: #ef4136;
  color: #fff;
  text-align: center;
  font-size: 16px;
  line-height: 26px;
  font-weight: 500;
}
.dock-sep {
  width: 1px;
  height: 57px;
  margin: 0 15px 0 -3px;
  background: rgba(60, 100, 160, 0.3);
  flex: none;
}
.dock-folder {
  width: 56px;
  height: 56px;
  margin-right: 12px;
  flex: none;
}
.dock-trash {
  width: 48px;
  height: 60px;
  flex: none;
}
</style>
